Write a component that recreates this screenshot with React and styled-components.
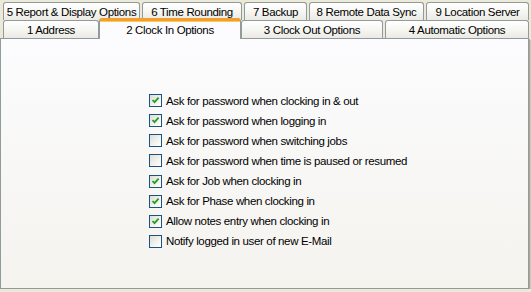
import React from "react";
import styled, { createGlobalStyle } from "styled-components";

const GlobalStyle = createGlobalStyle`
  html, body {
    margin: 0;
    padding: 0;
    background: #ece9d8;
  }
  body {
    font-family: "Liberation Sans", Arial, sans-serif;
    font-size: 11.5px;
    color: #000;
  }
`;

const topTabs = [
  { label: "5 Report & Display Options", width: 137 },
  { label: "6 Time Rounding", width: 100 },
  { label: "7 Backup", width: 63 },
  { label: "8 Remote Data Sync", width: 115 },
  { label: "9 Location Server", width: 103 },
];

const bottomTabs = [
  { label: "1 Address", width: 96 },
  { label: "2 Clock In Options", width: 138, selected: true },
  { label: "3 Clock Out Options", width: 142 },
  { label: "4 Automatic Options", width: 144 },
];

const options = [
  { label: "Ask for password when clocking in & out", checked: true },
  { label: "Ask for password when logging in", checked: true },
  { label: "Ask for password when switching jobs", checked: false },
  { label: "Ask for password when time is paused or resumed", checked: false },
  { label: "Ask for Job when clocking in", checked: true },
  { label: "Ask for Phase when clocking in", checked: true },
  { label: "Allow notes entry when clocking in", checked: true },
  { label: "Notify logged in user of new E-Mail", checked: false },
];

const Page = styled.div`
  width: 529px;
  padding-top: 2px;
`;

const TabRow = styled.div`
  display: flex;
  align-items: flex-end;
  gap: 2px;
  height: 18px;
  padding-left: 3px;
`;

const Tab = styled.div`
  box-sizing: border-box;
  flex: none;
  display: flex;
  align-items: center;
  justify-content: center;
  height: 18px;
  padding-top: 1px;
  border: 1px solid #919b9c;
  border-bottom: none;
  border-radius: 3px 3px 0 0;
  background: linear-gradient(to bottom, #ffffff 0%, #f7f7f4 45%, #ebeae4 100%);
  letter-spacing: -0.35px;
  white-space: nowrap;
  cursor: default;

  &.selected {
    position: relative;
    z-index: 1;
    height: 21px;
    margin: 0 -2px -1px;
    padding-top: 0;
    border-top: 3px solid #f0a032;
    background: #fcfcfe;
    box-shadow: inset 0 1px 0 #ffc94f;
  }
`;

const Panel = styled.div`
  box-sizing: border-box;
  height: 251px;
  width: 529px;
  border: 1px solid #919b9c;
  background: linear-gradient(to bottom, #fcfcfe 0%, #f4f3ee 100%);
  box-shadow: 1px 1px 0 #aca899, 2px 2px 0 #cbc8b8;
  padding: 55px 0 0 148px;
`;

const OptionList = styled.div`
  display: flex;
  flex-direction: column;
  gap: 7.15px;
`;

const OptionRow = styled.label`
  display: flex;
  align-items: center;
  gap: 4px;
  height: 13px;
  letter-spacing: -0.35px;
  white-space: nowrap;
`;

const Box = styled.span`
  box-sizing: border-box;
  flex: none;
  width: 13px;
  height: 13px;
  border: 1px solid #1c5180;
  background: linear-gradient(135deg, #dcdcd7 0%, #f2f2ee 55%, #ffffff 100%);
  display: flex;
  align-items: center;
  justify-content: center;
`;

const Check = () => (
  <svg width="9" height="9" viewBox="0 0 9 9">
    <path d="M1.5 4 L3.5 6.2 L7.6 1.6" fill="none" stroke="#21a121" strokeWidth="1.8" />
  </svg>
);

const Option = ({ label, checked }) => (
  <OptionRow>
    <Box>{checked && <Check />}</Box>
    <span>{label}</span>
  </OptionRow>
);

export default function App() {
  return (
    <>
      <GlobalStyle />
      <Page>
        <TabRow>
          {topTabs.map((t) => (
            <Tab key={t.label} style={{ width: t.width }}>
              {t.label}
            </Tab>
          ))}
        </TabRow>
        <TabRow>
          {bottomTabs.map((t) => (
            <Tab
              key={t.label}
              className={t.selected ? "selected" : undefined}
              style={{ width: t.selected ? t.width + 4 : t.width }}
            >
              {t.label}
            </Tab>
          ))}
        </TabRow>
        <Panel>
          <OptionList>
            {options.map((o) => (
              <Option key={o.label} {...o} />
            ))}
          </OptionList>
        </Panel>
      </Page>
    </>
  );
}
